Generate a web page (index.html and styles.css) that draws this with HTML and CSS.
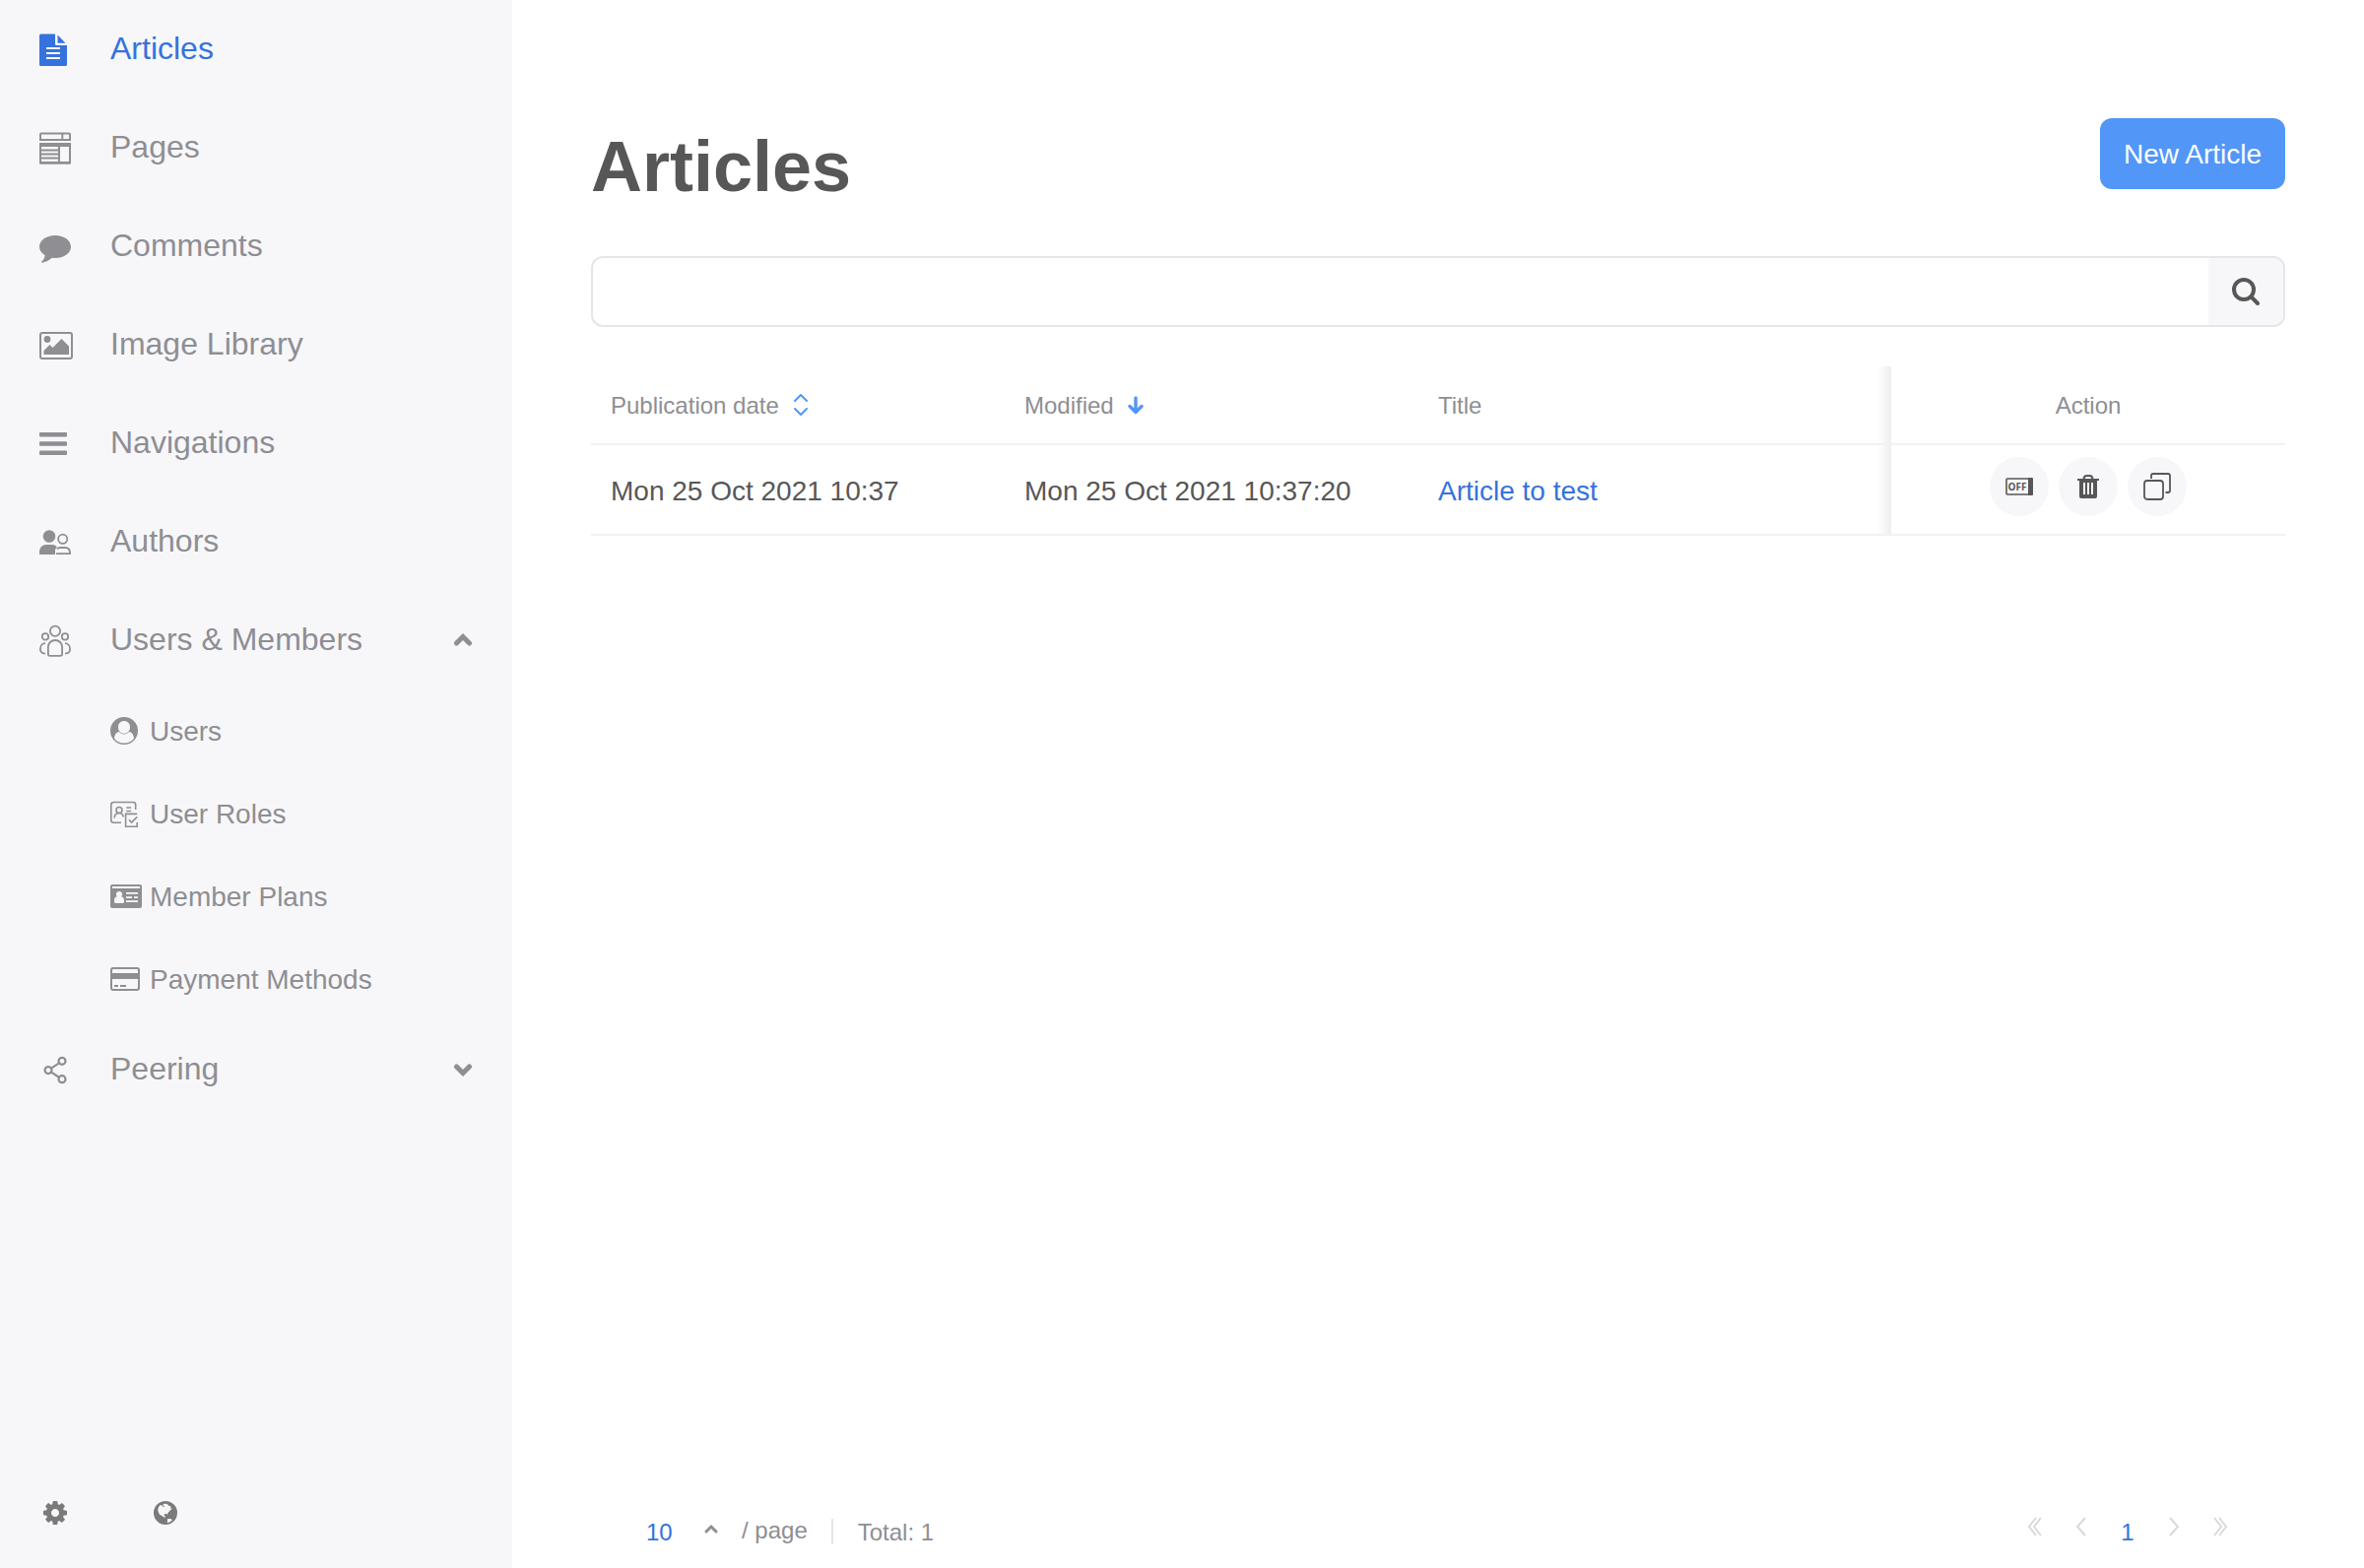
FILE: index.html
```html
<!DOCTYPE html>
<html lang="en">
<head>
<meta charset="utf-8">
<meta name="viewport" content="width=device-width, initial-scale=1">
<title>Articles</title>
<link rel="stylesheet" href="styles.css">
</head>
<body>
<div class="app">
  <aside class="sidebar">
    <nav aria-label="Main">
      <ul class="nav">
        <li><a class="nav-link active" href="#articles" aria-current="page">
          <svg class="nav-icon" viewBox="0 0 36 36" aria-hidden="true"><path fill="currentColor" fill-rule="evenodd" d="M1.500 2.500H16v10q0 1.500 1.500 1.500H28v19.500q0 1.500-1.500 1.500h-25Q0 35 0 33.500V4q0-1.500 1.500-1.500zM7 16v2h14v-2zm0 5v2h14v-2zm0 5v2h14v-2zM18.500 3.500l8 8.300h-8z"/></svg>
          <span>Articles</span></a></li>
        <li><a class="nav-link" href="#pages">
          <svg class="nav-icon" viewBox="0 0 36 36" aria-hidden="true"><path fill="none" stroke="currentColor" stroke-width="2" d="M2 3.500h28q1 0 1 1V10H1V4.500q0-1 1-1zM23.300 3.500V10M1 15v18.500h30V15"/><path fill="currentColor" d="M0 13h32v4H0zM19 16h2v17h-2zM1 19.500h19v2H1zM1 23.500h19v2H1zM1 27.500h19v2H1zM1 32h30v2.500H1z"/></svg>
          <span>Pages</span></a></li>
        <li><a class="nav-link" href="#comments">
          <svg class="nav-icon" viewBox="0 0 36 36" aria-hidden="true"><path fill="currentColor" d="M16 7c8.900 0 16 5.100 16 11.500S24.900 30 16 30q-1.500 0-3-.2-4.200 3.800-9.800 4.900-.8.100-1-.5-.100-.5.400-.9 2.700-2.500 3.100-6.100C2.200 25.100 0 22 0 18.500 0 12.100 7.100 7 16 7z"/></svg>
          <span>Comments</span></a></li>
        <li><a class="nav-link" href="#images">
          <svg class="nav-icon" viewBox="0 0 36 36" aria-hidden="true"><rect x="1" y="6" width="32" height="26" rx="2" fill="none" stroke="currentColor" stroke-width="2"/><circle cx="8" cy="12.500" r="3.400" fill="currentColor"/><path fill="currentColor" d="M4.500 28v-4l6-6 3 3 9-9 7.500 7.500V28z"/></svg>
          <span>Image Library</span></a></li>
        <li><a class="nav-link" href="#navigations">
          <svg class="nav-icon" viewBox="0 0 36 36" aria-hidden="true"><g fill="currentColor"><rect y="7" width="28" height="4.600" rx="1"/><rect y="16.200" width="28" height="4.600" rx="1"/><rect y="25.400" width="28" height="4.600" rx="1"/></g></svg>
          <span>Navigations</span></a></li>
        <li><a class="nav-link" href="#authors">
          <svg class="nav-icon" viewBox="0 0 36 36" aria-hidden="true"><circle cx="10" cy="12.500" r="6.300" fill="currentColor"/><path fill="currentColor" d="M0 31v-2.500C0 24 3 21 7 21h6q3 0 4.800 2.300-2 2-1.800 5V31z"/><g fill="none" stroke="currentColor" stroke-width="1.800"><circle cx="23.700" cy="15.300" r="4.600"/><path d="M17 30.100h14.100c0-4-2-6.100-5-6.100h-5q-2 0-3.300 1.300"/></g></svg>
          <span>Authors</span></a></li>
        <li>
          <button class="nav-link" type="button" aria-expanded="true">
            <svg class="nav-icon" viewBox="0 0 36 36" aria-hidden="true"><g fill="none" stroke="currentColor" stroke-width="1.800"><circle cx="16" cy="8.800" r="5.100"/><circle cx="6" cy="14.400" r="3.200"/><circle cx="26" cy="14.400" r="3.200"/><path d="M8.900 32V25c0-4 3-7 7.100-7s7.100 3 7.100 7v7q0 1.800-1.800 1.800H10.700Q8.900 33.800 8.900 32zM6 21.200c-3 0-5.100 2.500-5.100 6 0 2.500 1.600 4.200 5.100 4.500M26 21.200c3 0 5.100 2.500 5.100 6 0 2.500-1.600 4.200-5.100 4.500"/></g></svg>
            <span>Users &amp; Members</span>
            <svg class="nav-caret" viewBox="0 0 20 20" aria-hidden="true"><path d="M3.500 13 10 6.500l6.500 6.500"/></svg>
          </button>
          <ul class="subnav">
            <li><a class="subnav-link" href="#users">
              <svg class="subnav-icon" viewBox="0 0 32 32" aria-hidden="true"><path fill="currentColor" fill-rule="evenodd" d="M14 2a14 14 0 1 1 0 28 14 14 0 0 1 0-28zM8 12.300c0 3.900 2.600 6.500 6 6.500s6-2.600 6-6.500S17.400 6 14 6s-6 2.400-6 6.300zM4 23.500c2 3.200 5.700 5.100 10 5.100s8-1.900 10-5.100c-.3-3.200-2-6.300-4.900-6.500-1.300 1.500-3 2.400-5.100 2.400s-3.800-.9-5.100-2.400c-2.900.2-4.600 3.300-4.900 6.500z"/></svg>
              <span>Users</span></a></li>
            <li><a class="subnav-link" href="#roles">
              <svg class="subnav-icon" viewBox="0 0 32 32" aria-hidden="true"><g fill="none" stroke="currentColor" stroke-width="1.600"><path d="M11 25.200H3.500q-2.700 0-2.700-2.700V7q0-2.500 2.700-2.500H23q2.700 0 2.700 2.500v5"/><circle cx="9" cy="12.500" r="3"/><path d="M4.200 20.500c0-3 1.800-5 4.800-5q3.500 0 4.300 4M16.200 10h5M16.200 13.500h5M27.200 16.400H15.600v12.800h11.600V25M19 22.200l2.600 2.800 5.600-5.600"/></g></svg>
              <span>User Roles</span></a></li>
            <li><a class="subnav-link" href="#plans">
              <svg class="subnav-icon" viewBox="0 0 32 32" aria-hidden="true"><path fill="currentColor" fill-rule="evenodd" d="M2 4h28q2 0 2 2v20q0 2-2 2H2q-2 0-2-2V6q0-2 2-2zM2 6v2h28V6zM9 11a3 3 0 0 0-2.200 5.200C5 16.500 4 18 4 20v1.500Q4 23 5.500 23h7q1.500 0 1.500-1.500V20c0-2-1-3.500-2.800-3.800A3 3 0 0 0 9 11zM16 12v1.800h12V12zM16 16.200V18h6v-1.800zM24 16.200V18h4v-1.800zM16 20.200V22h12v-1.800z"/></svg>
              <span>Member Plans</span></a></li>
            <li><a class="subnav-link" href="#payments">
              <svg class="subnav-icon" viewBox="0 0 32 32" aria-hidden="true"><rect x="1" y="5" width="28" height="22" rx="2" fill="none" stroke="currentColor" stroke-width="2"/><path fill="currentColor" d="M1 10h28v6H1zM4 22h4v2H4zM10 22h6v2h-6z"/></svg>
              <span>Payment Methods</span></a></li>
          </ul>
        </li>
        <li>
          <button class="nav-link" type="button" aria-expanded="false">
            <svg class="nav-icon" viewBox="0 0 36 36" aria-hidden="true"><g fill="none" stroke="currentColor" stroke-width="2.200"><circle cx="9" cy="18.600" r="3.500"/><circle cx="23" cy="9.300" r="3.500"/><circle cx="23" cy="27.700" r="3.500"/><path d="M12 16.600l8-5.300M12 20.600l8 5.100"/></g></svg>
            <span>Peering</span>
            <svg class="nav-caret" viewBox="0 0 20 20" aria-hidden="true"><path d="M3.500 7l6.500 6.500L16.500 7"/></svg>
          </button>
        </li>
      </ul>
    </nav>
    <div class="tools">
      <button class="tool" type="button" aria-label="Settings"><svg viewBox="0 -128 1536 1536" aria-hidden="true"><path fill="currentColor" fill-rule="evenodd" d="M1024 640q0-106-75-181t-181-75-181 75-75 181 75 181 181 75 181-75 75-181zm512-109v222q0 12-8 23t-20 13l-185 28q-19 54-39 91 35 50 107 138 10 12 10 25t-9 23q-27 37-99 108t-94 71q-12 0-26-9l-138-108q-44 23-91 38-16 136-29 186-7 28-36 28h-222q-14 0-24.500-8.500t-11.500-21.500l-28-184q-49-16-90-37l-141 107q-10 9-25 9-14 0-25-11-126-114-165-168-7-10-7-23 0-12 8-23 15-21 51-66.500t54-70.500q-27-50-41-99l-183-27q-13-2-21-12.500t-8-23.500v-222q0-12 8-23t19-13l186-28q14-46 39-92-40-57-107-138-10-12-10-24 0-10 9-23 26-36 98.500-107.500t94.500-71.500q13 0 26 10l138 107q44-23 91-38 16-136 29-186 7-28 36-28h222q14 0 24.500 8.500t11.500 21.500l28 184q49 16 90 37l142-107q9-9 24-9 13 0 25 10 129 119 165 170 7 8 7 22 0 12-8 23-15 21-51 66.500t-54 70.500q26 50 41 98l183 28q13 2 21 12.500t8 23.500z"/></svg></button>
      <button class="tool" type="button" aria-label="Language"><svg viewBox="0 0 24 24" aria-hidden="true"><path fill="currentColor" fill-rule="evenodd" d="M12 0a12 12 0 1 1 0 24 12 12 0 0 1 0-24zM5 6l-.8 3.500 1.600 4 3.200 2 2.200 1.300 1-.8-1.600-1.500.4-1.600 2 .2 1 .9.300-1.800 2-2.300 2.600-2.300-1.700-.2.200-2.200-2.200-.4-1.200-1.500-1.800-.6-2.300.3-.5 1.500 2 1-1.500.5-1.500-1.400-1.500-.6zM14.200 18l-.5 4 2.500-.5 2.800-2.300-1.800-1.300z"/></svg></button>
    </div>
  </aside>

  <main class="main">
    <header class="page-head">
      <h1>Articles</h1>
      <button class="primary" type="button">New Article</button>
    </header>

    <form class="search" role="search">
      <input type="search" aria-label="Search articles">
      <button type="button" aria-label="Search"><svg viewBox="0 0 28 28" aria-hidden="true"><g fill="none" stroke="currentColor" stroke-width="4" stroke-linecap="round"><circle cx="12" cy="12" r="10"/><path d="M19.500 19.500 26 26"/></g></svg></button>
    </form>

    <table class="articles">
      <colgroup><col class="col-date"><col class="col-date"><col><col class="col-action"></colgroup>
      <thead>
        <tr>
          <th scope="col"><button class="sort" type="button">Publication date<svg viewBox="0 0 16 24" aria-hidden="true"><path fill="none" stroke="currentColor" stroke-width="2" stroke-linecap="round" stroke-linejoin="round" d="M2 7l6-6 6 6M2 15l6 6 6-6"/></svg></button></th>
          <th scope="col" aria-sort="descending"><button class="sort" type="button">Modified<svg viewBox="0 0 16 24" aria-hidden="true"><path fill="none" stroke="currentColor" stroke-width="3.400" stroke-linecap="round" stroke-linejoin="round" d="M8 4V18.500M2 12.500l6 6 6-6"/></svg></button></th>
          <th scope="col">Title</th>
          <th scope="col" class="action">Action</th>
        </tr>
      </thead>
      <tbody>
        <tr>
          <td>Mon 25 Oct 2021 10:37</td>
          <td>Mon 25 Oct 2021 10:37:20</td>
          <td><a href="#article">Article to test</a></td>
          <td class="action">
            <div class="actions">
              <button type="button" aria-label="Unpublish"><svg viewBox="0 0 28 28" aria-hidden="true"><rect x="1" y="6" width="26" height="16" rx="1" fill="none" stroke="currentColor" stroke-width="1.600"/><path fill="currentColor" d="M23 5h4q1 0 1 1v16q0 1-1 1h-4z"/><text class="off" x="12" y="18">OFF</text></svg></button>
              <button type="button" aria-label="Delete"><svg viewBox="0 0 28 28" aria-hidden="true"><path fill="none" stroke="currentColor" stroke-width="2" d="M9.500 6.500c0-2 1-3.500 3-3.500h3c2 0 3 1.500 3 3.500"/><path fill="currentColor" fill-rule="evenodd" d="M3 6h22v2h-2v16q0 2-2 2H7q-2 0-2-2V8H3zM9 10v12h2V10zm4 0v12h2V10zm4 0v12h2V10z"/></svg></button>
              <button type="button" aria-label="Duplicate"><svg viewBox="0 0 28 28" aria-hidden="true"><g fill="none" stroke="currentColor" stroke-width="1.800"><rect x="1" y="8" width="19" height="19" rx="3"/><path d="M8 6V3q0-2 2-2h15q2 0 2 2v15q0 2-2 2h-2.500"/></g></svg></button>
            </div>
          </td>
        </tr>
      </tbody>
    </table>

    <footer class="pager">
      <div class="pager-info">
        <label class="page-size">
          <span class="select-wrap">
            <select aria-label="Rows per page"><option>10</option><option>20</option></select>
            <svg viewBox="0 0 16 12" aria-hidden="true"><path d="M3 8l5-5 5 5"/></svg>
          </span>
          <span class="per-page">/ page</span>
        </label>
        <span class="total">Total: 1</span>
      </div>
      <nav class="pager-nav" aria-label="Pagination">
        <button type="button" disabled aria-label="First"><svg viewBox="0 0 16 20" aria-hidden="true"><path d="M9 1 2 10l7 9M14 1l-7 9 7 9"/></svg></button>
        <button type="button" disabled aria-label="Previous"><svg viewBox="0 0 16 20" aria-hidden="true"><path d="M12 1 4 10l8 9"/></svg></button>
        <button class="current" type="button" aria-current="page">1</button>
        <button type="button" disabled aria-label="Next"><svg viewBox="0 0 16 20" aria-hidden="true"><path d="M4 1l8 9-8 9"/></svg></button>
        <button type="button" disabled aria-label="Last"><svg viewBox="0 0 16 20" aria-hidden="true"><path d="M2 1l7 9-7 9M7 1l7 9-7 9"/></svg></button>
      </nav>
    </footer>
  </main>
</div>
</body>
</html>
```
FILE: styles.css
```css
* { box-sizing: border-box; }

body {
  margin: 0;
  font-family: "Liberation Sans", Arial, sans-serif;
  font-size: 28px;
  line-height: 40px;
  color: #575757;
  background: #fff;
}

button, input, select { font: inherit; color: inherit; }
button { margin: 0; padding: 0; border: 0; background: none; cursor: pointer; }
a { color: #3572de; text-decoration: none; }
ul { margin: 0; padding: 0; list-style: none; }
svg { display: block; flex: none; }

.app { display: flex; min-height: 100vh; }

/* Sidebar */
.sidebar {
  display: flex;
  flex-direction: column;
  justify-content: space-between;
  flex: 0 0 520px;
  background: #f7f7fa;
  color: #8e8e93;
}
.nav-link {
  display: flex;
  align-items: center;
  gap: 36px;
  width: 100%;
  padding: 29px 40px;
  font-size: 32px;
  text-align: left;
  color: #8e8e93;
}
.nav-link span { padding-bottom: 2px; }
.nav-link.active { color: #3572de; }
.nav-icon { width: 36px; height: 36px; }
.nav-caret { width: 20px; height: 20px; margin-left: auto; }
.nav-caret path {
  fill: none;
  stroke: currentColor;
  stroke-width: 5;
  stroke-linecap: round;
}
.subnav-link {
  display: flex;
  align-items: center;
  gap: 8px;
  padding: 21px 40px 21px 112px;
  color: #8e8e93;
}
.subnav-link span { padding-top: 2px; }
.subnav-icon { width: 32px; height: 32px; }
.tools { display: flex; gap: 88px; padding: 44px; }
.tool { color: #7a7a7a; }
.tool svg { width: 24px; height: 24px; }

/* Main column */
.main {
  display: flex;
  flex-direction: column;
  flex: 1;
  min-width: 0;
  padding: 120px 80px 16px;
}
.page-head {
  display: flex;
  align-items: flex-start;
  justify-content: space-between;
  margin-bottom: 42px;
}
h1 { margin: 0; font-size: 72px; line-height: 98px; }
.primary {
  padding: 17px 24px 15px;
  border-radius: 12px;
  background: #5297f8;
  color: #fff;
}

.search {
  display: flex;
  height: 72px;
  margin-bottom: 40px;
  border: 2px solid #e5e5ea;
  border-radius: 12px;
  overflow: hidden;
}
.search input {
  flex: 1;
  min-width: 0;
  padding: 0 24px;
  border: 0;
  outline: 0;
  background: none;
  appearance: none;
}
.search button {
  display: grid;
  place-items: center;
  width: 76px;
  background: #f7f7fa;
}
.search svg { width: 28px; height: 28px; }

/* Article table */
.articles { width: 100%; table-layout: fixed; border-collapse: separate; border-spacing: 0; }
.col-date { width: 420px; }
.col-action { width: 400px; }
.articles th, .articles td {
  padding: 0 20px;
  border-bottom: 2px solid #f2f2f5;
  text-align: left;
}
.articles th { height: 80px; padding-top: 2px; font-size: 24px; font-weight: 400; color: #8e8e93; }
.articles td { height: 92px; padding-top: 4px; }
.sort { display: flex; align-items: center; gap: 14px; }
.sort svg { width: 16px; height: 24px; color: #5297f8; }
.articles .action { position: relative; text-align: center; }
.action::before {
  content: "";
  position: absolute;
  top: 0;
  bottom: 0;
  right: 100%;
  width: 14px;
  background: linear-gradient(to left, #eeeeee, rgba(255, 255, 255, 0));
}
.actions { display: flex; justify-content: center; gap: 10px; padding-bottom: 10px; }
.actions button {
  display: grid;
  place-items: center;
  width: 60px;
  height: 60px;
  border-radius: 50%;
  background: #f7f7fa;
}
.actions svg { width: 28px; height: 28px; }
.off {
  font: 700 10px "Open Sans", sans-serif;
  fill: currentColor;
  text-anchor: middle;
}

/* Pagination */
.pager {
  display: flex;
  align-items: center;
  justify-content: space-between;
  margin-top: auto;
  padding: 0 58px 0 56px;
  font-size: 24px;
  color: #8e8e93;
}
.pager-info, .page-size, .select-wrap, .pager-nav { display: flex; align-items: center; }
.select-wrap { gap: 31px; }
.select-wrap select {
  width: 27px;
  height: 42px;
  padding: 2px 0 0;
  border: 0;
  background: none;
  color: #3572de;
  appearance: none;
}
.select-wrap svg { width: 16px; height: 12px; margin-bottom: 4px; }
.select-wrap path {
  fill: none;
  stroke: currentColor;
  stroke-width: 3;
  stroke-linecap: round;
}
.page-size { gap: 23px; }
.per-page { padding-bottom: 2px; }
.total {
  margin-left: 24px;
  padding: 2px 0 0 25px;
  border-left: 2px solid #e5e5ea;
  line-height: 24px;
}
.pager-nav { gap: 31px; }
.pager-nav button { display: grid; place-items: center; width: 16px; height: 42px; color: #d9d9d9; }
.pager-nav button svg { width: 16px; height: 20px; margin-bottom: 10px; }
.pager-nav path { fill: none; stroke: currentColor; stroke-width: 2; }
.pager-nav .current { padding-top: 2px; color: #3572de; }
```
